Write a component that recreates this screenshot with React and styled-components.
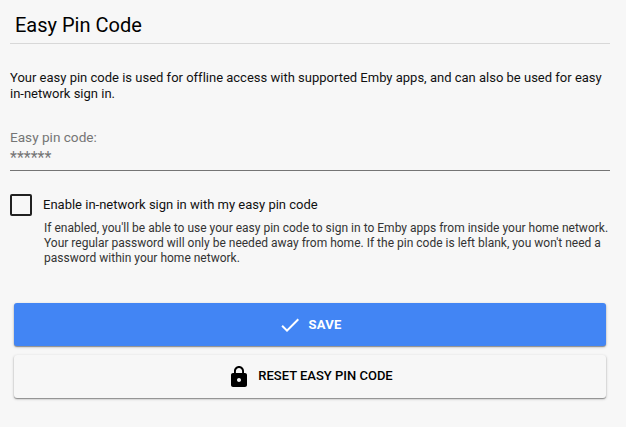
import React from "react";
import styled, { createGlobalStyle } from "styled-components";

const GlobalStyle = createGlobalStyle`
  * { box-sizing: border-box; }
  body { margin: 0; background: #f7f7f7; }
`;

const Page = styled.main`
  height: 427px;
  padding: 9px 16px 0 10px;
  background: #f7f7f7;
  color: #111;
  font-family: Roboto, sans-serif;
  font-size: 13px;
  overflow: hidden;
`;

const Title = styled.h1`
  margin: 0;
  height: 35px;
  padding-left: 5px;
  border-bottom: 1px solid #d8d8d8;
  color: #000;
  font-size: 20px;
  font-weight: 400;
  line-height: 32px;
`;

const Intro = styled.p`
  margin: 26px 0 0;
  line-height: 16px;
  font-variant-ligatures: none;
  white-space: nowrap;
`;

const Field = styled.label`
  display: block;
  margin-top: 26px;
  height: 43px;
  border-bottom: 1px solid #757575;
  color: #757575;
`;

const FieldLabel = styled.span`
  display: block;
  font-size: 13.6px;
  line-height: 18px;
`;

const PinInput = styled.span`
  display: block;
  font-size: 16px;
  line-height: 24px;
`;

const Option = styled.div`
  display: grid;
  grid-template-columns: 22px 1fr;
  column-gap: 11px;
  align-items: center;
  margin-top: 23px;
`;

const Checkbox = styled.span`
  width: 22px;
  height: 22px;
  border: 2px solid #212121;
  border-radius: 2px;
`;

const OptionText = styled.span`
  padding-bottom: 2px;
`;

const Help = styled.p`
  margin: 5px 0 0 34px;
  font-size: 12px;
  line-height: 15px;
  letter-spacing: 0.005px;
  color: #333;
  white-space: nowrap;
`;

const Actions = styled.div`
  display: flex;
  flex-direction: column;
  gap: 9px;
  margin: 37px 4px 0;
`;

const Button = styled.button`
  display: flex;
  align-items: center;
  justify-content: center;
  gap: 7px;
  height: 43px;
  padding: 0 ${({ $primary }) => ($primary ? 1 : 0)}px 0 0;
  border: 0;
  border-radius: 3px;
  background: ${({ $primary }) => ($primary ? "#4285f4" : "#f7f7f7")};
  color: ${({ $primary }) => ($primary ? "#fff" : "#000")};
  font: ${({ $primary }) => ($primary ? 700 : 500)} 13px Roboto, sans-serif;
  letter-spacing: ${({ $primary }) => ($primary ? "0.2px" : "0")};
  box-shadow: 0 1px 1px rgba(0, 0, 0, 0.32), 0 1px 3px rgba(0, 0, 0, 0.24);
  svg { width: 24px; height: 24px; fill: currentColor; }
`;

const ButtonText = styled.span`
  padding-bottom: ${({ $raised }) => ($raised ? 2 : 0)}px;
`;

export default function App() {
  return (
    <Page>
      <GlobalStyle />
      <Title>Easy Pin Code</Title>
      <Intro>
        Your easy pin code is used for offline access with supported Emby apps, and can also be used for easy
        <br />
        in-network sign in.
      </Intro>
      <Field>
        <FieldLabel>Easy pin code:</FieldLabel>
        <PinInput>******</PinInput>
      </Field>
      <Option>
        <Checkbox />
        <OptionText>Enable in-network sign in with my easy pin code</OptionText>
      </Option>
      <Help>
        If enabled, you'll be able to use your easy pin code to sign in to Emby apps from inside your home network.
        <br />
        Your regular password will only be needed away from home. If the pin code is left blank, you won't need a
        <br />
        password within your home network.
      </Help>
      <Actions>
        <Button $primary>
          <svg viewBox="0 0 24 24"><path d="M9 16.17 4.83 12l-1.42 1.41L9 19 21 7l-1.41-1.41z" /></svg>
          <ButtonText>SAVE</ButtonText>
        </Button>
        <Button>
          <svg viewBox="0 0 24 24"><path d="M18 8h-1V6c0-2.76-2.24-5-5-5S7 3.24 7 6v2H6c-1.1 0-2 .9-2 2v10c0 1.1.9 2 2 2h12c1.1 0 2-.9 2-2V10c0-1.1-.9-2-2-2zm-6 9c-1.1 0-2-.9-2-2s.9-2 2-2 2 .9 2 2-.9 2-2 2zm3.1-9H8.9V6c0-1.71 1.39-3.1 3.1-3.1s3.1 1.39 3.1 3.1z" /></svg>
          <ButtonText $raised>RESET EASY PIN CODE</ButtonText>
        </Button>
      </Actions>
    </Page>
  );
}
